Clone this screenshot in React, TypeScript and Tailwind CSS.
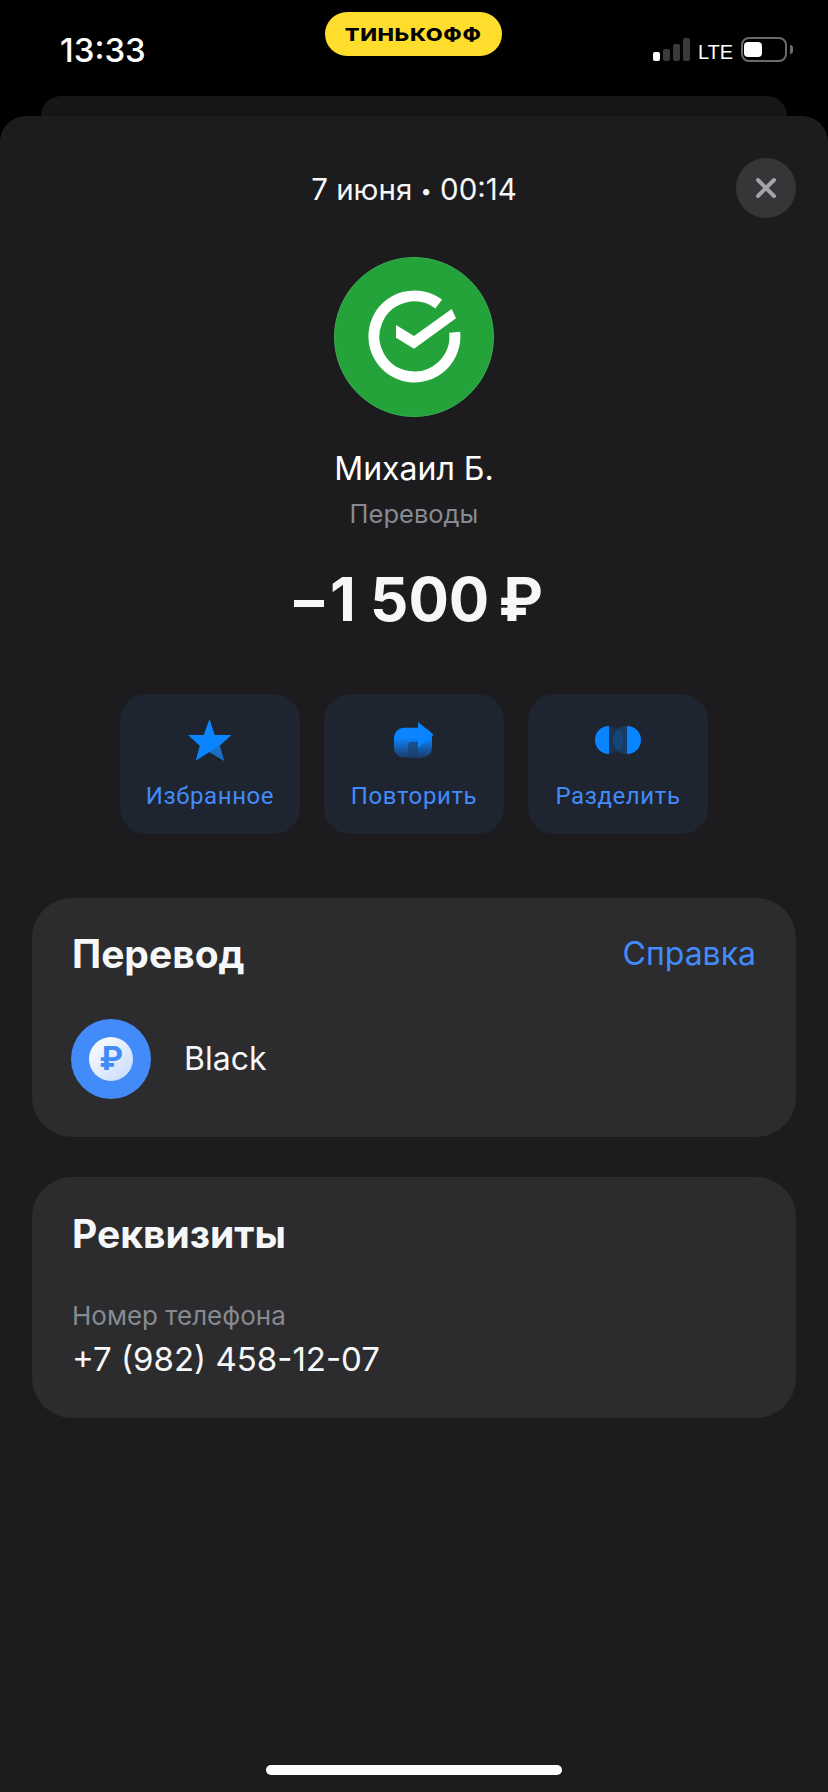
const INTER = "font-['Inter',sans-serif]";

const SberLogo = () => (
  <svg width="160" height="160" viewBox="0 0 160 160">
    <circle cx="80" cy="80" r="79.5" fill="#24a33b" stroke="#3bab50" />
    <path
      d="M104.7 47A40.5 40.5 0 1 0 120.7 75.3"
      fill="none"
      stroke="#fff"
      strokeWidth="11"
    />
    <path d="M62 68 L80 79 L117.7 52 L122 61.3 L80 91.7 L62 80.7Z" fill="#fff" />
  </svg>
);

const StarIcon = () => (
  <svg width="44" height="42" viewBox="0 0 44 42">
    <path d="M21.5 0 L26.7 16 L43.5 16 L31.7 26.7 L36 41.7 L21.5 33 L7.7 41.7 L11.7 26.7 L0 16 L15.7 16Z" fill="#0a84ff" />
    <path d="M31.7 26.7 L36 41.7 L21.5 33Z" fill="#1a6ec4" />
  </svg>
);

const RepeatIcon = () => (
  <svg width="40" height="36" viewBox="0 0 40 36">
    <defs>
      <linearGradient id="repeatFade" x1="0" y1="16" x2="0" y2="35" gradientUnits="userSpaceOnUse">
        <stop offset="0" stopColor="#0a84ff" />
        <stop offset="1" stopColor="#1c3d6b" />
      </linearGradient>
      <linearGradient id="repeatNotch" x1="0" y1="20" x2="0" y2="35" gradientUnits="userSpaceOnUse">
        <stop offset="0" stopColor="#17528f" />
        <stop offset="1" stopColor="#1c3d6b" />
      </linearGradient>
    </defs>
    <rect x="0" y="5.7" width="38" height="30" rx="10" fill="url(#repeatFade)" />
    <path d="M14 23A3 3 0 0 1 17 20H24V35.7H14Z" fill="url(#repeatNotch)" />
    <path d="M24 0L39.7 12.7L24 25.7Z" fill="#0a84ff" />
  </svg>
);

const SplitIcon = () => (
  <svg width="48" height="28" viewBox="0 0 48 28">
    <path d="M15 0A14 14 0 0 0 15 28Z" fill="#0a84ff" />
    <path d="M33 0A14 14 0 0 1 33 28Z" fill="#0a84ff" />
    <path d="M15 0A14 14 0 0 1 15 28Z" fill="#0a84ff" fillOpacity="0.15" />
    <path d="M33 0A14 14 0 0 0 33 28Z" fill="#0a84ff" fillOpacity="0.25" />
  </svg>
);

const actions = [
  { label: "Избранное", icon: <StarIcon /> },
  { label: "Повторить", icon: <RepeatIcon /> },
  { label: "Разделить", icon: <SplitIcon /> },
];

const App = () => {
  return (
    <div className={`w-[828px] h-[1792px] bg-black flex flex-col overflow-hidden ${INTER}`}>
      {/* status bar */}
      <div className="h-[96px] shrink-0 grid grid-cols-[325px_177px_1fr]">
        <div className="pl-[60px] pt-[31px] text-[33px] leading-[38px] font-medium text-white">13:33</div>
        <div className="mt-3 h-11 rounded-full bg-[#ffdd2d] flex items-center justify-center">
          <span className="inline-block scale-x-[1.22] text-[18px] font-extrabold tracking-[0.5px] text-black">ТИНЬКОФФ</span>
        </div>
        <div className="pl-[151px] pt-[36px] flex items-start">
          <div className="flex items-end gap-[3px] h-[24px] mt-[1px]">
            <div className="w-[7px] h-[9px] rounded-[2px] bg-white" />
            <div className="w-[7px] h-[12px] rounded-[2px] bg-[#3a3a3c]" />
            <div className="w-[7px] h-[17px] rounded-[2px] bg-[#3a3a3c]" />
            <div className="w-[7px] h-[23px] rounded-[2px] bg-[#3a3a3c]" />
          </div>
          <div className="ml-[8px] mt-[4px] origin-left scale-x-[0.95] text-[21px] leading-[24px] font-['Liberation_Sans',sans-serif] text-white">LTE</div>
          <div className="ml-[6px] mt-[1px] w-[46px] h-[25px] rounded-[8px] border-2 border-[#6b6b6d] px-[1px] py-[3px]">
            <div className="w-[18px] h-full rounded-[4px] bg-white" />
          </div>
          <div className="mt-[9px] ml-[3px] w-[3px] h-[9px] rounded-r-sm bg-[#6b6b6d]" />
        </div>
      </div>

      {/* card stacked behind the sheet */}
      <div className="h-5 mx-[41px] shrink-0 rounded-t-[20px] bg-[#161617]" />

      <div className="relative flex-1 rounded-t-[26px] bg-[#1c1c1e] flex flex-col items-center">
        <button className="absolute top-[42px] right-[32px] w-[60px] h-[60px] rounded-full bg-[#363638] flex items-center justify-center">
          <svg width="22" height="22" viewBox="0 0 22 22">
            <path d="M3 3L19 19M19 3L3 19" stroke="#a3a3a8" strokeWidth="4" strokeLinecap="round" />
          </svg>
        </button>

        <div className="mt-[56px] text-[29.5px] leading-[34px] text-[#f6f7f8]">
          7 июня <span className="text-[20px] align-[2px]">•</span> 00:14
        </div>

        <div className="mt-[49px]">
          <SberLogo />
        </div>

        <div className="mt-[32px] text-[32px] leading-[40px] text-white">Михаил Б.</div>
        <div className="mt-[10px] text-[25.5px] leading-[30px] text-[#868b93]">Переводы</div>

        <div className="mt-[35px] ml-[9px] text-[60px] leading-[70px] font-bold text-[#f6f7f8]">
          –<span className="ml-[6px]">1 500</span>
          <span className="-ml-[5px]"> ₽</span>
        </div>

        <div className="mt-[60px] flex gap-[24px]">
          {actions.map(({ label, icon }) => (
            <div key={label} className="w-[180px] h-[140px] rounded-[26px] bg-[#1e2530] flex flex-col items-center">
              <div className="h-[42px] mt-[25px] flex items-center justify-center">{icon}</div>
              <div className="mt-[21px] text-[24px] leading-[28px] tracking-[0.6px] text-[#428bf9] font-['Roboto',sans-serif]">{label}</div>
            </div>
          ))}
        </div>

        <div className="mt-[64px] w-[764px] h-[239px] rounded-[40px] bg-[#2c2c2e] px-[40px] pt-[34px]">
          <div className="flex items-center justify-between">
            <div className="text-[39px] leading-[44px] font-bold text-[#f6f7f8]">Перевод</div>
            <div className="text-[32px] leading-[44px] text-[#428bf9]">Справка</div>
          </div>
          <div className="mt-[43px] flex items-center gap-[33px]">
            <div className="w-[80px] h-[80px] -ml-[1px] rounded-full bg-[#428bf9] flex items-center justify-center">
              <div className="w-[44px] h-[44px] rounded-full bg-gradient-to-br from-white to-[#c6daf9] flex items-center justify-center text-[32px] leading-none font-bold text-[#428bf9]">
                ₽
              </div>
            </div>
            <div className="text-[32px] leading-[40px] text-[#f6f7f8]">Black</div>
          </div>
        </div>

        <div className="mt-[40px] w-[764px] h-[241px] rounded-[40px] bg-[#2c2c2e] px-[40px] pt-[35px]">
          <div className="text-[39px] leading-[44px] font-bold text-[#f6f7f8]">Реквизиты</div>
          <div className="mt-[45px] text-[26px] leading-[30px] text-[#868b93]">Номер телефона</div>
          <div className="mt-[8px] text-[33px] leading-[40px] text-[#f6f7f8]">+7 (982) 458-12-07</div>
        </div>

        <div className="mt-auto mb-[17px] w-[296px] h-[10px] rounded-full bg-white" />
      </div>
    </div>
  );
};

export default App;
